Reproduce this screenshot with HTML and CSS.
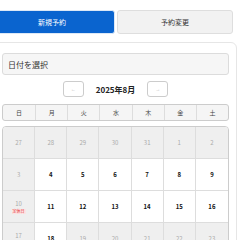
FILE: index.html
```html
<!DOCTYPE html>
<html lang="ja">
<head>
    <meta charset="UTF-8">
    <meta name="viewport" content="width=device-width, initial-scale=1.0">
    <title>予約</title>
    <link rel="stylesheet" href="styles.css">
</head>
<body>

<div class="tabs">
    <div class="tab active">新規予約</div>
    <div class="tab">予約変更</div>
</div>

<div class="card">
    <div class="date-input">日付を選択</div>

    <div class="month-nav">
        <button class="nav-btn">&larr;</button>
        <span class="month">2025年8月</span>
        <button class="nav-btn">&rarr;</button>
    </div>

    <div class="weekdays">
        <div>日</div><div>月</div><div>火</div><div>水</div><div>木</div><div>金</div><div>土</div>
    </div>

    <div class="days" id="days"></div>
</div>

<script>
var cells = [
    [27, 0], [28, 0], [29, 0], [30, 0], [31, 0], [1, 0], [2, 0],
    [3, 0], [4, 1], [5, 1], [6, 1], [7, 1], [8, 1], [9, 1],
    [10, 0, 1], [11, 1], [12, 1], [13, 1], [14, 1], [15, 1], [16, 1],
    [17, 0, 1], [18, 1], [19, 0], [20, 0], [21, 0], [22, 0], [23, 0]
];
var html = "";
for (var i = 0; i < cells.length; i++) {
    var c = cells[i];
    html += '<div class="day' + (c[1] ? ' open' : '') + '"><span>' + c[0] + '</span>' +
        (c[2] ? '<span class="closed">定休日</span>' : '') + '</div>';
}
document.getElementById("days").innerHTML = html;
</script>

</body>
</html>
```

FILE: styles.css
```css
body {
    margin: 0;
    font-family: "Noto Sans CJK JP", "Noto Sans", sans-serif;
    background-color: #fff;
    color: #222;
    overflow: hidden;
}
.tabs {
    display: grid;
    grid-template-columns: 126px 116px;
    gap: 2px;
    margin: 10px 0 0 -11px;
}
.tab {
    height: 24px;
    box-sizing: border-box;
    display: flex;
    align-items: center;
    justify-content: center;
    font-size: 7px;
    color: #333;
    background-color: #f2f2f2;
    border: 1px solid #dedede;
    border-radius: 3px;
}
.tab.active {
    background-color: #0a64cf;
    border-color: #dce8f6;
    color: #fff;
}
.card {
    width: 243px;
    box-sizing: border-box;
    margin: 8px 0 0 -6px;
    padding: 10px 7px 0;
    border: 1px solid #e6e6e6;
    border-radius: 6px;
}
.date-input {
    height: 22px;
    box-sizing: border-box;
    padding-left: 5px;
    display: flex;
    align-items: center;
    font-size: 8px;
    color: #333;
    background-color: #f6f6f6;
    border: 1px solid #dcdcdc;
    border-radius: 3px;
}
.month-nav {
    display: flex;
    align-items: center;
    justify-content: center;
    gap: 12px;
    margin-top: 6px;
}
.nav-btn {
    width: 21px;
    height: 16px;
    padding: 0;
    font-size: 5px;
    color: #bbb;
    background-color: #fff;
    border: 1px solid #ccc;
    border-radius: 3px;
}
.month {
    font-size: 8px;
    font-weight: bold;
    color: #222;
}
.weekdays {
    display: grid;
    grid-template-columns: repeat(7, 1fr);
    height: 17px;
    box-sizing: border-box;
    margin-top: 7px;
    background-color: #f5f5f5;
    border: 1px solid #ccc;
    border-radius: 3px;
}
.weekdays div {
    display: flex;
    align-items: center;
    justify-content: center;
    font-size: 6px;
    color: #444;
    border-left: 1px solid #ddd;
}
.weekdays div:first-child {
    border-left: none;
}
.days {
    display: grid;
    grid-template-columns: repeat(7, 1fr);
    grid-auto-rows: 32px;
    margin-top: 5px;
    border: 1px solid #ccc;
    border-radius: 4px;
    overflow: hidden;
}
.day {
    display: flex;
    flex-direction: column;
    align-items: center;
    justify-content: center;
    gap: 1px;
    font-size: 6px;
    color: #aaa;
    background-color: #efefef;
    border-right: 1px solid #ddd;
    border-bottom: 1px solid #ddd;
}
.day:nth-child(7n) {
    border-right: none;
}
.day.open {
    color: #111;
    font-weight: bold;
    background-color: #fff;
}
.closed {
    font-size: 4px;
    line-height: 5px;
    padding: 0 1px;
    color: #e03030;
    background-color: #fde3e3;
}
```
